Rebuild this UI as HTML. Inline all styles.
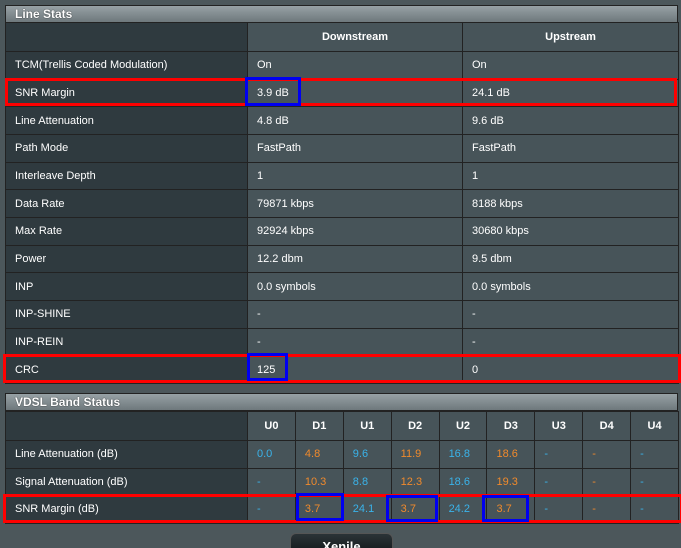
<!DOCTYPE html>
<html style="overflow:hidden;height:548px"><head><style>
body{margin:0;width:681px;height:548px;background:#4c575b;font-family:"Liberation Sans",Arial,sans-serif;font-size:11px;color:#fff;position:relative;overflow:hidden}
.bar{position:absolute;left:5px;width:673px;height:18px;background:linear-gradient(#97a1a5,#6e787c);border:1px solid #222;box-sizing:border-box;font-weight:bold;font-size:12px;padding-left:9px;line-height:16px;text-shadow:0 0 1px #000}
table{position:absolute;left:5px;border-collapse:collapse;table-layout:fixed}
td{border:1px solid #222;padding:0;height:27.67px;background:#475459;box-sizing:border-box}
td.l{background:#2f3a3f;padding-left:9px}
td.v{padding-left:9px}
th{border:1px solid #222;background:#475459;font-weight:bold;height:29px;padding:0;box-sizing:border-box}
th.l{background:#2f3a3f}
.b{color:#3ab3ea}.o{color:#f08a2c}
.c td{text-align:left;padding-left:9px;height:27.5px}
.box{position:absolute;box-sizing:border-box}
.r{border:3px solid #f00}.u{border:3px solid #0000f0}
.btn{position:absolute;left:290px;top:533px;width:103px;height:15px;background:linear-gradient(#2b3337,#1a2023);border-radius:6px 6px 0 0;border:1px solid #555;border-bottom:none;box-sizing:border-box;text-align:center;font-weight:bold;font-size:13px;line-height:26px;overflow:hidden}
</style></head><body>
<div class="bar" style="top:5px">Line Stats</div>
<table style="top:22px;width:673px">
<col style="width:242px"><col style="width:215px"><col style="width:216px">
<tr><th class="l"></th><th>Downstream</th><th>Upstream</th></tr>
<tr><td class="l">TCM(Trellis Coded Modulation)</td><td class="v">On</td><td class="v">On</td></tr>
<tr><td class="l">SNR Margin</td><td class="v">3.9 dB</td><td class="v">24.1 dB</td></tr>
<tr><td class="l">Line Attenuation</td><td class="v">4.8 dB</td><td class="v">9.6 dB</td></tr>
<tr><td class="l">Path Mode</td><td class="v">FastPath</td><td class="v">FastPath</td></tr>
<tr><td class="l">Interleave Depth</td><td class="v">1</td><td class="v">1</td></tr>
<tr><td class="l">Data Rate</td><td class="v">79871 kbps</td><td class="v">8188 kbps</td></tr>
<tr><td class="l">Max Rate</td><td class="v">92924 kbps</td><td class="v">30680 kbps</td></tr>
<tr><td class="l">Power</td><td class="v">12.2 dbm</td><td class="v">9.5 dbm</td></tr>
<tr><td class="l">INP</td><td class="v">0.0 symbols</td><td class="v">0.0 symbols</td></tr>
<tr><td class="l">INP-SHINE</td><td class="v">-</td><td class="v">-</td></tr>
<tr><td class="l">INP-REIN</td><td class="v">-</td><td class="v">-</td></tr>
<tr><td class="l">CRC</td><td class="v">125</td><td class="v">0</td></tr>
</table>
<div class="bar" style="top:393px">VDSL Band Status</div>
<table class="c" style="top:411px;width:673px">
<col style="width:242px"><col span="9" style="width:47.9px">
<tr><th class="l"></th><th>U0</th><th>D1</th><th>U1</th><th>D2</th><th>U2</th><th>D3</th><th>U3</th><th>D4</th><th>U4</th></tr>
<tr><td class="l">Line Attenuation (dB)</td><td class="b">0.0</td><td class="o">4.8</td><td class="b">9.6</td><td class="o">11.9</td><td class="b">16.8</td><td class="o">18.6</td><td class="b">-</td><td class="o">-</td><td class="b">-</td></tr>
<tr><td class="l">Signal Attenuation (dB)</td><td class="b">-</td><td class="o">10.3</td><td class="b">8.8</td><td class="o">12.3</td><td class="b">18.6</td><td class="o">19.3</td><td class="b">-</td><td class="o">-</td><td class="b">-</td></tr>
<tr><td class="l">SNR Margin (dB)</td><td class="b">-</td><td class="o">3.7</td><td class="b">24.1</td><td class="o">3.7</td><td class="b">24.2</td><td class="o">3.7</td><td class="b">-</td><td class="o">-</td><td class="b">-</td></tr>
</table>
<div class="box r" style="left:5px;top:78px;width:672px;height:28px"></div>
<div class="box u" style="left:245px;top:77px;width:56px;height:29px"></div>
<div class="box r" style="left:3px;top:354px;width:678px;height:29px"></div>
<div class="box u" style="left:247px;top:353px;width:41px;height:28px"></div>
<div class="box r" style="left:3px;top:494px;width:680px;height:29px"></div>
<div class="box u" style="left:296px;top:493px;width:48px;height:28px"></div>
<div class="box u" style="left:386px;top:495px;width:52px;height:27px"></div>
<div class="box u" style="left:482px;top:495px;width:47px;height:27px"></div>
<div class="btn">Xenile</div>
</body></html>
